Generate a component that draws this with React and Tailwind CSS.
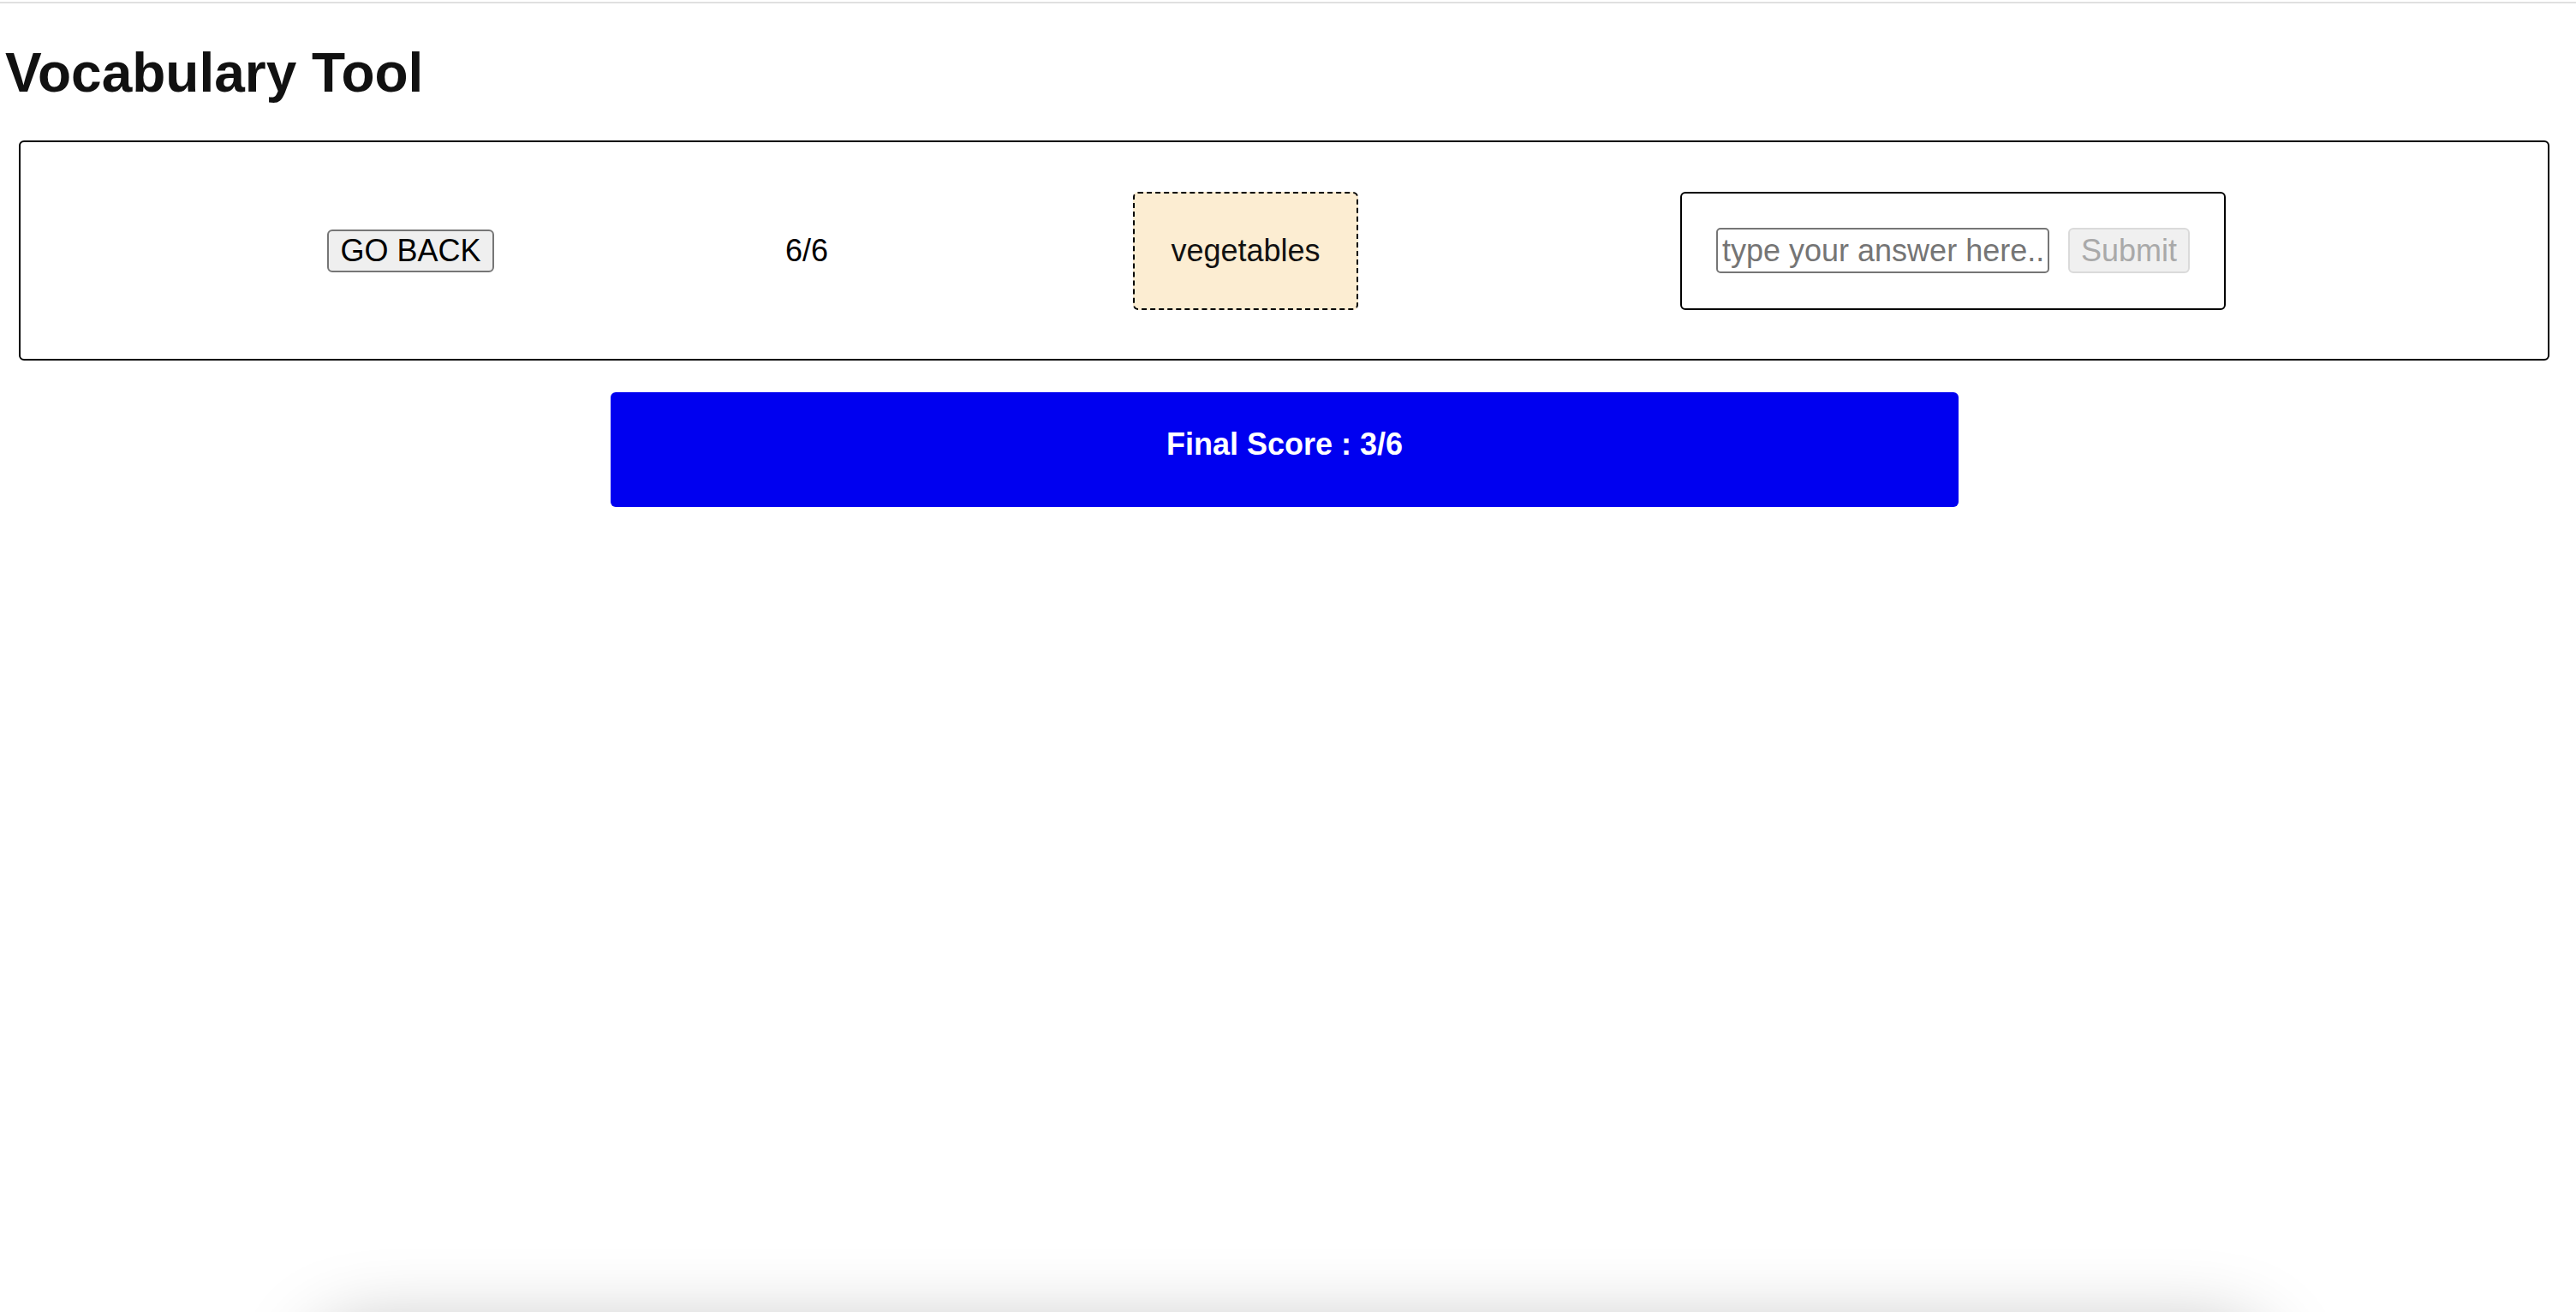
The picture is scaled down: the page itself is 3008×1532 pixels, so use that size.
export default function App() {
  return (
    <div className="relative min-h-screen bg-white font-['Liberation_Sans',Arial,sans-serif] text-black pt-[2px]">
      {/* top divider */}
      <div className="h-[2px] bg-[#e0e0e0]" />

      <h1 className="mt-[44px] pl-[6px] text-[64px] leading-[74px] font-bold text-[#111111]">
        Vocabulary Tool
      </h1>

      {/* Quiz panel */}
      <div className="mt-[42px] ml-[22px] w-[2955px] h-[257px] border-2 border-black rounded-[6px] flex items-center pl-[358px] text-[36px] leading-[41px]">
        <button className="w-[195px] h-[50px] bg-[#efefef] border-2 border-[#767676] rounded-[6px] text-black text-[36px] leading-[41px]">
          GO BACK
        </button>

        <span className="ml-[340px] w-[48px]">6/6</span>

        <div className="ml-[358px] w-[263px] h-[138px] bg-[#fcedd2] border-2 border-dashed border-black rounded-[6px] flex items-center justify-center text-[#111111]">
          vegetables
        </div>

        <div className="ml-[376px] w-[637px] h-[138px] border-2 border-black rounded-[6px] flex items-center px-[40px]">
          <input
            type="text"
            placeholder="type your answer here.."
            className="w-[389px] h-[53px] border-2 border-[#767676] rounded-[5px] px-[5px] text-[36px] text-black placeholder:text-[#757575] outline-none"
          />
          <button
            disabled
            className="ml-[22px] w-[142px] h-[53px] bg-[#f0f0f0] border-2 border-[#dadada] rounded-[6px] text-[#a9a9a9] text-[36px] leading-[41px]"
          >
            Submit
          </button>
        </div>
      </div>

      {/* Score bar */}
      <div className="mt-[37px] ml-[713px] w-[1574px] h-[134px] pb-[14px] bg-[#0000f0] rounded-[6px] flex items-center justify-center text-white font-bold text-[36px] leading-[41px]">
        Final Score : 3/6
      </div>

      {/* shadow of element below the fold */}
      <div className="fixed left-[365px] right-[360px] top-[1552px] h-[200px] rounded-[60px] bg-white shadow-[0_0_90px_rgba(0,0,0,0.28)]" />
    </div>
  );
}
